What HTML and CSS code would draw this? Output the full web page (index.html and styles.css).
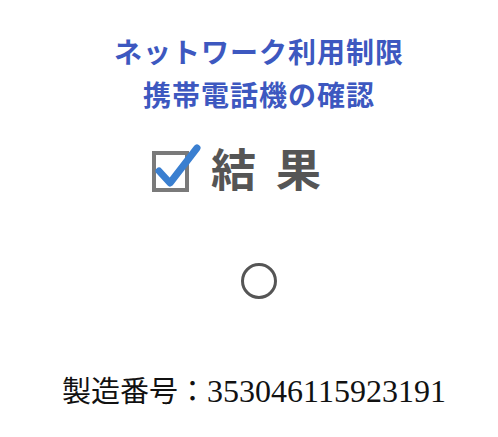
FILE: index.html
```html
<!DOCTYPE html>
<html lang="ja">
<head>
<meta charset="utf-8">
<link rel="stylesheet" href="styles.css">
</head>
<body>
<main class="page">
  <h1 class="title">ネットワーク利用制限<br>携帯電話機の確認</h1>
  <div class="result">
    <svg class="check" width="50" height="52" viewBox="0 0 50 52">
      <rect x="3" y="11" width="33" height="37" fill="none" stroke="#7a7a7a" stroke-width="4"/>
      <path d="M8 29 L19 41 L46 6" fill="none" stroke="#3a7fd0" stroke-width="7" stroke-linecap="round" stroke-linejoin="round"/>
    </svg>
    <span class="label">結</span><span class="label">果</span>
  </div>
  <div class="status">
    <svg width="40" height="40" viewBox="0 0 40 40">
      <circle cx="20" cy="20" r="16.5" fill="none" stroke="#555" stroke-width="3"/>
    </svg>
  </div>
  <p class="serial"><span class="serial-label">製造番号：</span><span class="serial-num">353046115923191</span></p>
</main>
</body>
</html>
```
FILE: styles.css
```css
html, body {
  margin: 0;
  padding: 0;
  background: #fff;
}
.page {
  padding-left: 20px;
  padding-top: 30px;
  display: flex;
  flex-direction: column;
  align-items: center;
}
.title {
  margin: 0;
  font-family: "Noto Sans CJK JP", sans-serif;
  font-weight: 700;
  font-size: 28px;
  line-height: 43px;
  letter-spacing: 1px;
  color: #3d58c0;
  text-align: center;
}
.result {
  margin-top: 24px;
  margin-right: 46px;
  display: flex;
  align-items: center;
  height: 56px;
}
.check {
  display: block;
  margin-right: 10px;
}
.label {
  font-family: "Noto Sans CJK JP", sans-serif;
  font-weight: 700;
  font-size: 45px;
  line-height: 56px;
  color: #555;
  margin-right: 20px;
}
.label:last-child {
  margin-right: 0;
}
.status {
  margin-top: 65px;
  display: flex;
}
.status svg {
  display: block;
}
.serial {
  margin: 68px 0 0 0;
  margin-right: 10px;
  line-height: 40px;
  color: #111;
  white-space: nowrap;
}
.serial-label {
  font-family: "Noto Sans CJK JP", sans-serif;
  font-size: 29px;
}
.serial-num {
  font-family: "Liberation Serif", serif;
  font-size: 32px;
}
```
